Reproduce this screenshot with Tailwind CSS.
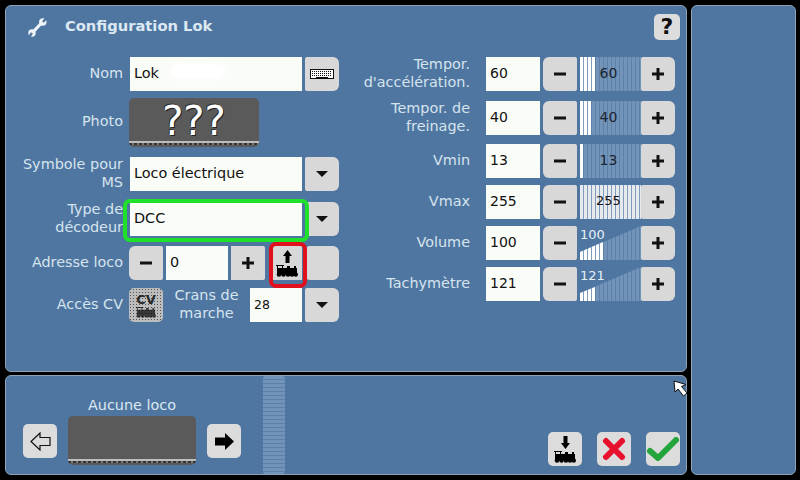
<!DOCTYPE html>
<html lang="fr">
<head>
<meta charset="UTF-8">
<title>Configuration Lok</title>
<script src="https://cdn.jsdelivr.net/npm/@tailwindcss/browser@4"></script>
</head>
<body class="w-[800px] h-[480px] overflow-hidden bg-black font-['DejaVu_Sans',sans-serif] text-[14.4px] leading-[18px] text-[#d6e4ee]">
<svg class="hidden">
  <symbol id="train" viewBox="0 0 22 12">
    <path d="M0 0h8v1h-8zM1 1h1v2h-1zM6 1h1v2h-1zM11 1h3v2h-3zM18 1h2v2h-2zM1 3h20v6h-20z" fill="#000"/>
    <circle cx="3" cy="9.500" r="2.300" fill="#000"/><circle cx="7.500" cy="9.500" r="2.300" fill="#000"/><circle cx="12" cy="9.500" r="2.300" fill="#000"/><circle cx="16" cy="9.500" r="2.300" fill="#000"/><circle cx="19.800" cy="9.500" r="2.200" fill="#000"/>
  </symbol>
  <symbol id="minus" viewBox="0 0 12 12"><path d="M0 4.500h12v3h-12z" fill="#111"/></symbol>
  <symbol id="plus" viewBox="0 0 12 12"><path d="M4.500 0h3v4.500h4.500v3h-4.500v4.500h-3v-4.500h-4.500v-3h4.500z" fill="#111"/></symbol>
  <symbol id="caret" viewBox="0 0 12 6"><path d="M0 0h12l-6 6z" fill="#111"/></symbol>
</svg>

<div class="flex gap-[4px] pt-[5px] pl-[5px]">
  <div class="flex flex-col gap-[3px] w-[682px]">
    <!-- panneau principal -->
    <div class="relative h-[367px] rounded-[6px] border border-[#8fa3b8] bg-[#4f76a1]">
      <div class="flex items-center h-[51px] pb-[9px]">
        <svg class="ml-[22px] w-[19px] h-[19px]" viewBox="0 0 19 19">
          <path d="M4.500 14.500l10-10.500" stroke="#eef4f8" stroke-width="3.200"/>
          <circle cx="14.800" cy="4" r="3.700" fill="#eef4f8"/><circle cx="4" cy="15" r="3.700" fill="#eef4f8"/>
          <path d="M15 4l3-3.500M4 15l-2.500 3.500" stroke="#4f76a1" stroke-width="2.400"/>
        </svg>
        <span class="ml-[18px] mb-[2px] font-bold text-[14.7px] text-[#dce9f2]">Configuration Lok</span>
        <div class="ml-auto mr-[6px] flex items-center justify-center w-[26px] h-[26px] rounded-[5px] bg-[#dcdcdc] text-[#111] font-bold text-[22px]">?</div>
      </div>

      <div class="flex">
        <!-- colonne gauche -->
        <div class="w-[333px]">
          <div class="flex items-center h-[34px]">
            <div class="w-[117px] pb-[3px] text-right">Nom</div>
            <div class="relative ml-[7px] flex items-center w-[172px] h-[34px] pl-[4px] pb-[3px] bg-[#fafcf7] text-[#111]">Lok<span class="absolute left-[40px] top-[6px] w-[56px] h-[16px] rounded-full bg-white blur-[2px]"></span></div>
            <div class="ml-[3px] flex items-center justify-center w-[34px] h-[34px] rounded-r-[6px] rounded-l-[2px] bg-[#d8d8d8]">
              <svg class="w-[24px] h-[10px]" viewBox="0 0 24 10"><rect x=".5" y=".5" width="23" height="9" fill="#fff" stroke="#111"/><path d="M2 2.500h20M2 4.500h20M2 6.500h20" stroke="#111" stroke-dasharray="1 1"/><path d="M6 8.500h12" stroke="#111"/></svg>
            </div>
          </div>
          <div class="flex items-center h-[49px] mt-[7px]">
            <div class="w-[117px] pb-[3px] text-right">Photo</div>
            <div class="relative ml-[6px] flex justify-center w-[130px] h-[49px] rounded-[5px] bg-[#5a5a5a] overflow-hidden">
              <span class="mt-[1px] text-[40px] leading-[44px] text-white [text-shadow:1px_1px_0_#222,-1px_-1px_0_#333]">???</span>
              <span class="absolute left-0 right-0 bottom-[2px] flex flex-col">
                <span class="h-[2px] bg-[#bdbdbd]"></span>
                <span class="h-[2px] bg-[repeating-linear-gradient(90deg,#333_0,#333_3px,#777_3px,#777_5px)]"></span>
              </span>
            </div>
          </div>
          <div class="flex items-center h-[34px] mt-[10px]">
            <div class="w-[117px] pb-[3px] text-right">Symbole pour MS</div>
            <div class="ml-[7px] flex items-center w-[172px] h-[34px] pl-[4px] pb-[3px] bg-[#fafcf7] text-[#111]">Loco électrique</div>
            <div class="ml-[3px] flex items-center justify-center w-[34px] h-[34px] rounded-r-[6px] rounded-l-[2px] bg-[#d8d8d8]"><svg class="w-[12px] h-[6px]"><use href="#caret"/></svg></div>
          </div>
          <div class="flex items-center h-[34px] mt-[11px]">
            <div class="w-[117px] pb-[3px] text-right">Type de décodeur</div>
            <div class="ml-[7px] flex items-center w-[172px] h-[34px] pl-[4px] pb-[3px] bg-[#fafcf7] text-[#111]">DCC</div>
            <div class="ml-[3px] flex items-center justify-center w-[34px] h-[34px] rounded-r-[6px] rounded-l-[2px] bg-[#d8d8d8]"><svg class="w-[12px] h-[6px]"><use href="#caret"/></svg></div>
          </div>
          <div class="flex items-center h-[34px] mt-[10px]">
            <div class="w-[117px] pb-[3px] text-right">Adresse loco</div>
            <div class="ml-[6px] flex items-center justify-center w-[34px] h-[34px] rounded-l-[6px] rounded-r-[2px] bg-[#d8d8d8]"><svg class="w-[12px] h-[12px]"><use href="#minus"/></svg></div>
            <div class="ml-[3px] flex items-center w-[62px] h-[34px] pl-[4px] pb-[3px] bg-[#fafcf7] text-[#111]">0</div>
            <div class="ml-[3px] flex items-center justify-center w-[34px] h-[34px] rounded-r-[2px] bg-[#d8d8d8]"><svg class="w-[12px] h-[12px]"><use href="#plus"/></svg></div>
            <div class="ml-[7px] flex flex-col items-center justify-center gap-[2px] w-[30px] h-[34px] bg-[#d8d8d8]">
              <svg class="w-[9px] h-[13px]" viewBox="0 0 9 13"><path d="M4.500 0l4.500 6h-2.500v7h-4v-7h-2.500z" fill="#000"/></svg>
              <svg class="w-[22px] h-[12px]"><use href="#train"/></svg>
            </div>
            <div class="ml-[4px] w-[33px] h-[34px] rounded-r-[6px] rounded-l-[4px] bg-[#d8d8d8]"></div>
          </div>
          <div class="flex items-center h-[34px] mt-[8px]">
            <div class="w-[117px] pb-[3px] text-right">Accès CV</div>
            <div class="ml-[6px] flex flex-col items-center justify-center w-[34px] h-[34px] rounded-[5px] bg-[#bdbdbd] bg-[radial-gradient(#555_0.7px,transparent_0.8px)] bg-[length:3px_3px]">
              <span class="font-bold text-[13px] leading-[14px] text-[#2a2a2a]">CV</span>
              <svg class="w-[20px] h-[11px] opacity-70"><use href="#train"/></svg>
            </div>
            <div class="w-[87px] pb-[2px] text-center">Crans de marche</div>
            <div class="flex items-center w-[52px] h-[34px] pl-[4px] bg-[#fafcf7] text-[#111] text-[12.500px]">28</div>
            <div class="ml-[3px] flex items-center justify-center w-[34px] h-[34px] rounded-r-[6px] rounded-l-[2px] bg-[#d8d8d8]"><svg class="w-[12px] h-[6px]"><use href="#caret"/></svg></div>
          </div>
        </div>

        <!-- colonne droite -->
        <div class="ml-[6px]">
          <div class="flex items-center h-[34px]">
            <div class="w-[125px] pb-[3px] text-right">Tempor. d'accélération.</div>
            <div class="ml-[16px] flex items-center w-[54px] h-[34px] pl-[4px] pb-[3px] bg-[#fafcf7] text-[#111] text-[14px]">60</div>
            <div class="ml-[3px] flex items-center justify-center w-[34px] h-[34px] rounded-l-[6px] rounded-r-[2px] bg-[#d8d8d8]"><svg class="w-[12px] h-[12px]"><use href="#minus"/></svg></div>
            <div class="relative ml-[3px] flex items-center justify-center w-[61px] h-[34px] pb-[3px] pr-[4px] bg-[repeating-linear-gradient(90deg,#7294b8_0,#7294b8_3px,#5c80a9_3px,#5c80a9_4px)]">
              <span class="absolute left-0 top-0 h-full w-[15px] bg-[repeating-linear-gradient(90deg,#fff_0,#fff_3px,#7f9cbd_3px,#7f9cbd_4px)]"></span>
              <span class="relative text-[14px] text-[#1a2430]">60</span>
            </div>
            <div class="flex items-center justify-center w-[34px] h-[34px] rounded-r-[6px] rounded-l-[2px] bg-[#d8d8d8]"><svg class="w-[12px] h-[12px]"><use href="#plus"/></svg></div>
          </div>
          <div class="flex items-center h-[34px] mt-[10px]">
            <div class="w-[125px] pb-[3px] text-right">Tempor. de freinage.</div>
            <div class="ml-[16px] flex items-center w-[54px] h-[34px] pl-[4px] pb-[3px] bg-[#fafcf7] text-[#111] text-[14px]">40</div>
            <div class="ml-[3px] flex items-center justify-center w-[34px] h-[34px] rounded-l-[6px] rounded-r-[2px] bg-[#d8d8d8]"><svg class="w-[12px] h-[12px]"><use href="#minus"/></svg></div>
            <div class="relative ml-[3px] flex items-center justify-center w-[61px] h-[34px] pb-[3px] pr-[4px] bg-[repeating-linear-gradient(90deg,#7294b8_0,#7294b8_3px,#5c80a9_3px,#5c80a9_4px)]">
              <span class="absolute left-0 top-0 h-full w-[11px] bg-[repeating-linear-gradient(90deg,#fff_0,#fff_3px,#7f9cbd_3px,#7f9cbd_4px)]"></span>
              <span class="relative text-[14px] text-[#1a2430]">40</span>
            </div>
            <div class="flex items-center justify-center w-[34px] h-[34px] rounded-r-[6px] rounded-l-[2px] bg-[#d8d8d8]"><svg class="w-[12px] h-[12px]"><use href="#plus"/></svg></div>
          </div>
          <div class="flex items-center h-[34px] mt-[9px]">
            <div class="w-[125px] pb-[3px] text-right">Vmin</div>
            <div class="ml-[16px] flex items-center w-[54px] h-[34px] pl-[4px] pb-[3px] bg-[#fafcf7] text-[#111] text-[14px]">13</div>
            <div class="ml-[3px] flex items-center justify-center w-[34px] h-[34px] rounded-l-[6px] rounded-r-[2px] bg-[#d8d8d8]"><svg class="w-[12px] h-[12px]"><use href="#minus"/></svg></div>
            <div class="relative ml-[3px] flex items-center justify-center w-[61px] h-[34px] pb-[3px] pr-[4px] bg-[repeating-linear-gradient(90deg,#7294b8_0,#7294b8_3px,#5c80a9_3px,#5c80a9_4px)]">
              <span class="absolute left-0 top-0 h-full w-[3px] bg-white"></span>
              <span class="relative text-[14px] text-[#1a2430]">13</span>
            </div>
            <div class="flex items-center justify-center w-[34px] h-[34px] rounded-r-[6px] rounded-l-[2px] bg-[#d8d8d8]"><svg class="w-[12px] h-[12px]"><use href="#plus"/></svg></div>
          </div>
          <div class="flex items-center h-[34px] mt-[7px]">
            <div class="w-[125px] pb-[3px] text-right">Vmax</div>
            <div class="ml-[16px] flex items-center w-[54px] h-[34px] pl-[4px] pb-[3px] bg-[#fafcf7] text-[#111] text-[14px]">255</div>
            <div class="ml-[3px] flex items-center justify-center w-[34px] h-[34px] rounded-l-[6px] rounded-r-[2px] bg-[#d8d8d8]"><svg class="w-[12px] h-[12px]"><use href="#minus"/></svg></div>
            <div class="relative ml-[3px] flex items-center justify-center w-[61px] h-[34px] pb-[3px] pr-[4px] bg-[repeating-linear-gradient(90deg,#e6e9ee_0,#e6e9ee_3px,#7f9cbd_3px,#7f9cbd_4px)]">
              <span class="relative text-[13px] text-[#111]">255</span>
            </div>
            <div class="flex items-center justify-center w-[34px] h-[34px] rounded-r-[6px] rounded-l-[2px] bg-[#d8d8d8]"><svg class="w-[12px] h-[12px]"><use href="#plus"/></svg></div>
          </div>
          <div class="flex items-center h-[34px] mt-[7px]">
            <div class="w-[125px] pb-[3px] text-right">Volume</div>
            <div class="ml-[16px] flex items-center w-[54px] h-[34px] pl-[4px] pb-[3px] bg-[#fafcf7] text-[#111] text-[14px]">100</div>
            <div class="ml-[3px] flex items-center justify-center w-[34px] h-[34px] rounded-l-[6px] rounded-r-[2px] bg-[#d8d8d8]"><svg class="w-[12px] h-[12px]"><use href="#minus"/></svg></div>
            <div class="relative ml-[3px] w-[61px] h-[34px]">
              <span class="absolute inset-0 [clip-path:polygon(0_26px,100%_0,100%_100%,0_100%)] bg-[repeating-linear-gradient(90deg,#7294b8_0,#7294b8_3px,#5c80a9_3px,#5c80a9_4px)]"></span>
              <span class="absolute inset-0 [clip-path:polygon(0_26px,23px_16px,23px_100%,0_100%)] bg-[repeating-linear-gradient(90deg,#fff_0,#fff_3px,#7f9cbd_3px,#7f9cbd_4px)]"></span>
              <span class="absolute left-0 top-0 text-[13px] text-[#e6f0f7]">100</span>
            </div>
            <div class="flex items-center justify-center w-[34px] h-[34px] rounded-r-[6px] rounded-l-[2px] bg-[#d8d8d8]"><svg class="w-[12px] h-[12px]"><use href="#plus"/></svg></div>
          </div>
          <div class="flex items-center h-[34px] mt-[7px]">
            <div class="w-[125px] pb-[3px] text-right">Tachymètre</div>
            <div class="ml-[16px] flex items-center w-[54px] h-[34px] pl-[4px] pb-[3px] bg-[#fafcf7] text-[#111] text-[14px]">121</div>
            <div class="ml-[3px] flex items-center justify-center w-[34px] h-[34px] rounded-l-[6px] rounded-r-[2px] bg-[#d8d8d8]"><svg class="w-[12px] h-[12px]"><use href="#minus"/></svg></div>
            <div class="relative ml-[3px] w-[61px] h-[34px]">
              <span class="absolute inset-0 [clip-path:polygon(0_26px,100%_0,100%_100%,0_100%)] bg-[repeating-linear-gradient(90deg,#7294b8_0,#7294b8_3px,#5c80a9_3px,#5c80a9_4px)]"></span>
              <span class="absolute inset-0 [clip-path:polygon(0_26px,15px_20px,15px_100%,0_100%)] bg-[repeating-linear-gradient(90deg,#fff_0,#fff_3px,#7f9cbd_3px,#7f9cbd_4px)]"></span>
              <span class="absolute left-0 top-0 text-[13px] text-[#e6f0f7]">121</span>
            </div>
            <div class="flex items-center justify-center w-[34px] h-[34px] rounded-r-[6px] rounded-l-[2px] bg-[#d8d8d8]"><svg class="w-[12px] h-[12px]"><use href="#plus"/></svg></div>
          </div>
        </div>
      </div>

      <!-- surlignages -->
      <div class="absolute left-[117px] top-[193px] w-[186px] h-[43px] rounded-[7px] border-[4px] border-[#1fe12a]"></div>
      <div class="absolute left-[263px] top-[236px] w-[38px] h-[46px] rounded-[7px] border-[4px] border-[#e0101c]"></div>
    </div>

    <!-- panneau du bas -->
    <div class="relative flex h-[100px] rounded-[6px] border border-[#8fa3b8] bg-[#4f76a1]">
      <div class="ml-[17px] mt-[48px] flex items-center justify-center w-[34px] h-[34px] rounded-[5px] bg-[#dcdcdc]">
        <svg class="w-[21px] h-[19px]" viewBox="0 0 21 19"><path d="M1 9.500l9-8.500v4.500h10v8h-10v4.500z" fill="none" stroke="#111" stroke-width="1.200"/></svg>
      </div>
      <div class="ml-[11px] w-[128px]">
        <div class="mt-[20px] text-center text-[#dce9f2]">Aucune loco</div>
        <div class="relative mt-[2px] h-[49px] rounded-[5px] bg-[#5a5a5a] overflow-hidden">
          <span class="absolute left-0 right-0 bottom-[2px] flex flex-col">
            <span class="h-[2px] bg-[#bdbdbd]"></span>
            <span class="h-[2px] bg-[repeating-linear-gradient(90deg,#333_0,#333_3px,#777_3px,#777_5px)]"></span>
          </span>
        </div>
      </div>
      <div class="ml-[11px] mt-[48px] flex items-center justify-center w-[34px] h-[34px] rounded-[5px] bg-[#dcdcdc]">
        <svg class="w-[21px] h-[19px]" viewBox="0 0 21 19"><path d="M20 9.500l-9-8.500v4.500h-10v8h10v4.500z" fill="#000"/></svg>
      </div>
      <div class="ml-[22px] w-[22px] h-[98px] rounded-[3px] bg-[repeating-linear-gradient(180deg,#7294b8_0,#7294b8_3px,#5c80a9_3px,#5c80a9_4px)]"></div>
      <div class="ml-auto mr-[6px] mt-[56px] flex gap-[15px]">
        <div class="flex flex-col items-center justify-center gap-[2px] w-[34px] h-[34px] rounded-[5px] bg-[#dcdcdc]">
          <svg class="w-[9px] h-[13px]" viewBox="0 0 9 13"><path d="M4.500 13l4.500-6h-2.500v-7h-4v7h-2.500z" fill="#000"/></svg>
          <svg class="w-[22px] h-[12px]"><use href="#train"/></svg>
        </div>
        <div class="flex items-center justify-center w-[34px] h-[34px] rounded-[5px] bg-[#dcdcdc]">
          <svg class="w-[24px] h-[24px]" viewBox="0 0 24 24"><path d="M4 4l16 16M20 4l-16 16" stroke="#e8112d" stroke-width="6" stroke-linecap="round"/></svg>
        </div>
        <div class="flex items-center justify-center w-[34px] h-[34px] rounded-[5px] bg-[#dcdcdc]">
          <svg class="w-[32px] h-[24px]" viewBox="0 0 32 24"><path d="M3 14l8 7 18-18" fill="none" stroke="#24a53c" stroke-width="6" stroke-linecap="round" stroke-linejoin="round"/></svg>
        </div>
      </div>
      <svg class="absolute left-[667px] top-[4px] w-[17px] h-[18px]" viewBox="0 0 17 18"><path d="M1 1l1 11 3-3 5.500 7 3.500-3-5.500-6.500 4.500-2z" fill="#fff" stroke="#111" stroke-width="1"/></svg>
    </div>
  </div>

  <!-- panneau droit -->
  <div class="w-[105px] h-[470px] rounded-[6px] border border-[#8fa3b8] bg-[#4f76a1]"></div>
</div>
</body>
</html>
